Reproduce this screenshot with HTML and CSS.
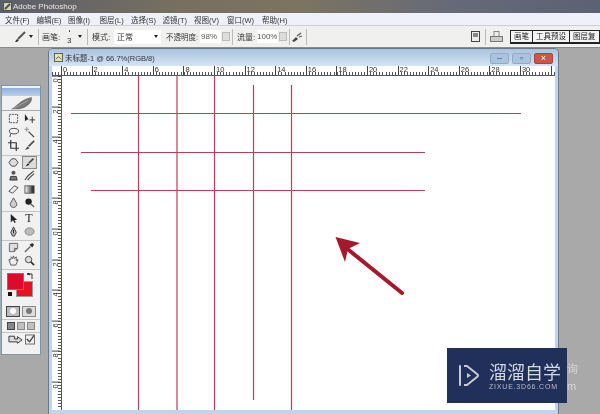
FILE: index.html
```html
<!DOCTYPE html>
<html>
<head>
<meta charset="utf-8">
<title>Adobe Photoshop</title>
<link rel="stylesheet" href="styles.css">
</head>
<body>
<div class="app">

<div class="titlebar">
<svg class="app-icon" width="9" height="9" viewBox="0 0 9 9"><rect x="0.5" y="0.5" width="8" height="8" fill="#d8d4a8" stroke="#555"/><path d="M2 7 L7 2" stroke="#456" stroke-width="2"/></svg>
<span>Adobe Photoshop</span>
</div>

<div class="menubar">
<span>文件(F)</span><span>编辑(E)</span><span>图像(I)</span><span>图层(L)</span><span>选择(S)</span><span>滤镜(T)</span><span class="m-view">视图(V)</span><span class="m-window">窗口(W)</span><span>帮助(H)</span>
</div>

<div class="options">
<svg class="opt-brush" width="12" height="12" viewBox="0 0 12 12"><path d="M1 11 L3 8 L5 9 L3 11 Z" fill="#333"/><path d="M4 8 L11 1" stroke="#555" stroke-width="2"/></svg>
<i class="arrow a-tool"></i>
<i class="sep s-tool"></i>
<span class="label l-brush">画笔:</span>
<span class="brush-size">3</span>
<i class="arrow a-brush"></i>
<i class="sep s-brush"></i>
<span class="label l-mode">模式:</span>
<span class="select">正常<i class="arrow"></i></span>
<span class="label l-opacity">不透明度:</span>
<span class="field f-opacity">98%</span><i class="spin"></i>
<i class="sep s-opacity"></i>
<span class="label l-flow">流量:</span>
<span class="field f-flow">100%</span><i class="spin"></i>
<i class="sep s-flow"></i>
<svg class="opt-air" width="12" height="12" viewBox="0 0 12 12"><path d="M1 10 L5 6 L7 8 L3 11 Z" fill="#444"/><path d="M6 5 L10 2 M8 6 L11 5" stroke="#555" stroke-width="1.2"/></svg>
<i class="sep s-air"></i>
<span class="spacer"></span>
<svg class="opt-doc" width="9" height="11" viewBox="0 0 9 11"><rect x="0.5" y="0.5" width="8" height="10" fill="#eee" stroke="#444"/><rect x="2" y="2" width="5" height="4" fill="#888"/></svg>
<i class="sep s-doc"></i>
<svg class="opt-print" width="13" height="12" viewBox="0 0 13 12"><rect x="4" y="0.5" width="5" height="5" fill="#eee" stroke="#888"/><rect x="0.5" y="5.5" width="12" height="5" fill="#ccc" stroke="#777"/></svg>
<div class="tabs"><span>画笔</span><span>工具预设</span><span>图层复</span></div>
</div>

<div class="workspace">

<div class="toolbox">
<div class="tool-head"></div>
<div class="tool-logo"><svg width="30" height="14" viewBox="0 0 30 16"><path d="M2 15 C8 13 12 4 26 1 C28 6 22 13 12 15 Z" fill="#777"/><path d="M6 14 L22 5" stroke="#aaa"/></svg></div>

<div class="tool-grid g-select">
<svg viewBox="0 0 12 12"><rect x="1.5" y="1.5" width="9" height="9" fill="none" stroke="#444" stroke-dasharray="2 1"/></svg>
<svg viewBox="0 0 12 12"><path d="M1 1 L1 9 L3.5 7 L5 7 Z" fill="#222"/><path d="M9 4 V11 M6 7.5 H12" stroke="#333"/></svg>
<svg viewBox="0 0 12 12"><ellipse cx="6.5" cy="4.5" rx="5" ry="3" fill="none" stroke="#444"/><path d="M3 7 L2 11" stroke="#444"/></svg>
<svg viewBox="0 0 12 12"><path d="M5 5 L11 11" stroke="#444" stroke-width="1.4"/><path d="M3 0 V5 M0.5 2.5 H5.500" stroke="#888"/></svg>
<svg viewBox="0 0 12 12"><path d="M3 0 V9 H12 M0 3 H9 V12" fill="none" stroke="#333" stroke-width="1.3"/></svg>
<svg viewBox="0 0 12 12"><path d="M1 11 L4 7 L6 9 Z" fill="#333"/><path d="M5 7 L11 1" stroke="#555" stroke-width="2"/></svg>
</div>

<div class="tool-grid">
<svg viewBox="0 0 12 12"><path d="M1 6 L4 2 H8 L11 6 L8 10 H4 Z" fill="#ddd" stroke="#444"/></svg>
<svg class="is-active" viewBox="0 0 14 14"><path d="M2 12 L5 8 L7 10 Z" fill="#222"/><path d="M6 8 L12 2" stroke="#444" stroke-width="2"/></svg>
<svg viewBox="0 0 12 12"><circle cx="6" cy="3" r="2.2" fill="#555"/><path d="M2 11 L3 7 H9 L10 11 Z" fill="#777" stroke="#333"/></svg>
<svg viewBox="0 0 12 12"><path d="M1 11 C3 6 6 5 11 1 M4 11 C6 8 9 6 11 4" fill="none" stroke="#444" stroke-width="1.2"/></svg>
<svg viewBox="0 0 12 12"><path d="M1 8 L7 2 L11 4 L5 10 Z" fill="#eee" stroke="#444"/></svg>
<svg viewBox="0 0 12 12"><defs><linearGradient id="grad"><stop offset="0" stop-color="#fff"/><stop offset="1" stop-color="#111"/></linearGradient></defs><rect x="1" y="2" width="10" height="8" fill="url(#grad)" stroke="#555"/></svg>
<svg viewBox="0 0 12 12"><path d="M6 1 L9.500 7 A3.600 3.600 0 1 1 2.500 7 Z" fill="#ccc" stroke="#555"/></svg>
<svg viewBox="0 0 12 12"><circle cx="5" cy="5" r="3.500" fill="#222"/><path d="M7 7 L11 11" stroke="#666" stroke-width="1.5"/></svg>
</div>

<div class="tool-grid">
<svg viewBox="0 0 12 12"><path d="M3 1 V10 L5.500 8 L7 11 L8.500 10 L7 7.500 H10 Z" fill="#222"/></svg>
<span class="tool-t">T</span>
<svg viewBox="0 0 12 12"><path d="M6 1 L9 7 L7 11 H5 L3 7 Z" fill="#bbb" stroke="#333"/><path d="M6 4 V8" stroke="#222"/></svg>
<svg viewBox="0 0 12 12"><ellipse cx="6" cy="6" rx="5" ry="4" fill="#bbb" stroke="#888"/></svg>
</div>

<div class="tool-grid">
<svg viewBox="0 0 12 12"><path d="M1.500 1.500 H10.500 V7 L7 10.500 H1.500 Z" fill="#ddd" stroke="#666"/><path d="M7 10.500 V7 H10.500" fill="#999" stroke="#666"/></svg>
<svg viewBox="0 0 12 12"><path d="M1 11 L7 5" stroke="#666" stroke-width="1.5"/><path d="M6 3 L9 6 L11 3 L9 1 Z" fill="#333"/></svg>
<svg viewBox="0 0 12 12"><path d="M3 11 L1 5 L3 5 L3.500 2 L5 4 L6 1 L7 4 L9 2 L9 6 L11 5 L8.500 11 Z" fill="#eee" stroke="#555"/></svg>
<svg viewBox="0 0 12 12"><circle cx="5" cy="5" r="3.500" fill="#ddd" stroke="#444"/><path d="M7.500 7.500 L11 11" stroke="#333" stroke-width="1.800"/></svg>
</div>

<div class="swatches">
<i class="swatch-bg"></i>
<i class="swatch-fg"></i>
<i class="swatch-mini"></i>
<svg class="swatch-swap" width="6" height="6" viewBox="0 0 6 6"><path d="M0 1 H5 V6 M3 0 L0 1 L3 2" fill="none" stroke="#333"/></svg>
</div>

<div class="tool-row">
<span class="mode is-down"><i></i></span>
<span class="mode"><i class="dark"></i></span>
</div>
<div class="tool-row small">
<span class="screen is-down"></span><span class="screen"></span><span class="screen"></span>
</div>
<div class="tool-row jump">
<svg width="15" height="11" viewBox="0 0 16 11"><path d="M1 2 H7 V5 H10 V2.500 L15 6 L10 9.500 V8 H1 Z" fill="#ddd" stroke="#333"/></svg>
<svg width="10" height="11" viewBox="0 0 11 11"><rect x="0.500" y="0.500" width="10" height="10" fill="#eee" stroke="#666"/><path d="M2 5 L5 8 L10 1" fill="none" stroke="#444" stroke-width="1.500"/></svg>
</div>
</div>

<div class="docwin">
<div class="doc-title">
<svg width="9" height="9" viewBox="0 0 10 10"><rect x="0.500" y="0.500" width="9" height="9" fill="#e8e4b0" stroke="#555"/><path d="M2 7 L5 4 L8 7" fill="none" stroke="#456"/></svg>
<span class="doc-name">未标题-1 @ 66.7%(RGB/8)</span>
<span class="win-btn">–</span><span class="win-btn">▫</span><span class="win-btn close">×</span>
</div>
<div class="hruler">
<span>0</span><span>2</span><span>4</span><span>6</span><span>8</span><span>10</span><span>12</span><span>14</span><span>16</span><span>18</span><span>20</span><span>22</span><span>24</span><span>26</span><span>28</span><span>30</span><span></span>
</div>
<div class="doc-body">
<div class="vruler">
<span>0</span><span>2</span><span>4</span><span>6</span><span>8</span><span>0</span><span>2</span><span>4</span><span>6</span><span>8</span><span>0</span>
</div>
<div class="canvas">
<svg width="493" height="334" viewBox="0 0 493 334">
<g stroke="#b8405c" stroke-width="1.200" fill="none">
<path d="M9 37.500 H459"/>
<path d="M19 76.500 H363"/>
<path d="M29 114.500 H363"/>
<path d="M76.500 0 V334"/>
<path d="M115 0 V334"/>
<path d="M152.500 0 V334"/>
<path d="M191.500 9 V324"/>
<path d="M229.500 9 V334"/>
</g>
<path d="M340 217 L283 171" stroke="#a5192c" stroke-width="4" stroke-linecap="round"/>
<path d="M273.500 161 L298 167 L286 173 L283 186 Z" fill="#a5192c"/>
</svg>
</div>
</div>
</div>

<div class="ghost">询<br>m</div>
<div class="watermark">
<svg width="25" height="25" viewBox="0 0 25 25"><path d="M5 3 V22" stroke="#c8ccd6" stroke-width="2" stroke-linecap="round"/><path d="M9 3 H12 L22 11 Q24 12.500 22 14 L12 22 H9" fill="none" stroke="#c8ccd6" stroke-width="2" stroke-linejoin="round"/><path d="M12 10 L16 12.500 L12 15 Z" fill="#c8ccd6"/></svg>
<div class="wm-text"><b>溜溜自学</b><small>ZIXUE.3D66.COM</small></div>
</div>

</div>
</div>
</body>
</html>
```

FILE: styles.css
```css
/* Photoshop window */

html, body
{ margin: 0;
height: 100%;
overflow: hidden;
}

.app
{ width: 600px;
height: 414px;
display: flex;
flex-direction: column;
overflow: hidden;
font-family: "Liberation Sans", "Noto Sans CJK SC", sans-serif;
color: #333;
filter: blur(0.35px);
}

.titlebar
{ height: 13px;
display: flex;
align-items: center;
gap: 1px;
padding-left: 3px;
background: linear-gradient(90deg, #5c5f6b 0, #77705f 30%, #7b7460 50%, #666a78 75%, #5b6273 100%);
color: #e8e8e8;
font-size: 8px;
}

.menubar
{ height: 12px;
display: flex;
align-items: center;
gap: 6.500px;
padding-left: 5px;
background: #eef0fb;
font-size: 7.500px;
}

.menubar span
{ width: 25px;
white-space: nowrap;
}

.menubar .m-view { width: 26.500px; }
.menubar .m-window { width: 28.500px; }

/* Options bar */

.options
{ height: 22px;
display: flex;
align-items: center;
background: #f0f0ef;
border-top: 1px solid #cfcfd2;
box-sizing: border-box;
font-size: 8px;
}

.label
{ white-space: nowrap;
}

.arrow
{ width: 0;
height: 0;
border: 2.500px solid transparent;
border-top: 3px solid #222;
border-bottom: 0;
}

.sep
{ width: 1px;
height: 16px;
background: #bbb;
}

.opt-brush { margin-left: 14px; }
.a-tool { margin-left: 3px; }
.s-tool { margin-left: 5px; }
.l-brush { margin-left: 3px; width: 20px; }
.brush-size { position: relative; margin: 7px 0 0 5px; width: 6px; }
.brush-size::before
{ content: "";
position: absolute;
left: 2px;
top: -6px;
width: 1px;
height: 2px;
background: #555;
}
.a-brush { margin-left: 5px; }
.s-brush { margin-left: 5px; }
.l-mode { margin-left: 4px; width: 22px; }

.select
{ width: 47px;
height: 14px;
display: flex;
align-items: center;
justify-content: space-between;
box-sizing: border-box;
padding: 0 3px;
background: #fff;
}

.l-opacity { margin-left: 5px; width: 34px; font-size: 7.500px; }

.field
{ height: 13px;
line-height: 13px;
background: #fff;
font-size: 8px;
color: #555;
}

.f-opacity { width: 20px; padding-left: 1px; }
.f-flow { width: 21px; }

.spin
{ width: 8px;
height: 9px;
margin-left: 1px;
background: #ddd;
border: 1px solid #bbb;
box-sizing: border-box;
}

.s-opacity { margin-left: 2px; }
.l-flow { margin-left: 4px; width: 20px; }
.s-flow { margin-left: 2px; }
.opt-air { margin-left: 1px; }
.s-air { margin-left: 3px; }
.spacer { flex: 1; }
.s-doc { margin-left: 5px; }
.opt-print { margin-left: 4px; }

.tabs
{ display: flex;
align-self: flex-end;
margin: 0 0 3px 7px;
width: 90px;
overflow: hidden;
}

.tabs span
{ border: 1px solid #222;
border-bottom: 2px solid #222;
padding: 0 3px;
height: 11px;
line-height: 11px;
background: #f4f4f4;
font-size: 7.500px;
white-space: nowrap;
color: #222;
}

.tabs span + span { margin-left: -1px; }

/* Work area */

.workspace
{ position: relative;
flex: 1;
background: #a9a9a9;
border-top: 1px solid #8c8c8c;
}

.toolbox
{ position: absolute;
left: 1px;
top: 37px;
width: 38px;
height: 266px;
background: #f0f1f0;
border: 1px solid #7f96a8;
display: flex;
flex-direction: column;
padding-top: 2px;
box-sizing: content-box;
}

.tool-head
{ height: 8px;
flex: none;
background: linear-gradient(#8fb0dc, #bcd0ea);
}

.tool-logo
{ height: 14px;
flex: none;
display: flex;
justify-content: flex-end;
padding-right: 3px;
border-bottom: 1px solid #aaa;
}

.tool-grid
{ display: grid;
flex: none;
grid-template-columns: 16px 16px;
grid-auto-rows: 13.500px;
justify-content: center;
justify-items: center;
align-items: center;
padding-bottom: 1px;
border-bottom: 1px solid #c4c4c4;
}

.tool-grid.g-select { padding: 1px 0 2px; }

.tool-grid svg
{ width: 11px;
height: 11px;
}

.tool-grid svg.is-active
{ width: 15px;
height: 13px;
background: #dcdcdc;
border: 1px solid #888;
box-sizing: border-box;
}

.tool-t
{ font: 12px "Liberation Serif", serif;
color: #222;
}

.swatches
{ position: relative;
flex: none;
height: 28px;
}

.swatch-fg, .swatch-bg, .swatch-mini
{ position: absolute;
display: block;
box-sizing: border-box;
}

.swatch-bg
{ left: 14px;
top: 11px;
width: 17px;
height: 16px;
background: #e8121c;
border: 1px solid #999;
}

.swatch-fg
{ left: 5px;
top: 3px;
width: 17px;
height: 17px;
background: #dc0b2c;
border: 1px solid #777;
}

.swatch-mini
{ left: 5px;
top: 21px;
width: 6px;
height: 6px;
background: #111;
border: 1px solid #eee;
}

.swatch-swap
{ position: absolute;
left: 25px;
top: 3px;
}

.tool-row
{ display: flex;
flex: none;
justify-content: center;
gap: 2px;
margin-top: 8px;
}

.tool-row.small { margin-top: 2px; padding-top: 2px; border-top: 1px solid #c4c4c4; }
.tool-row.jump { margin-top: 2px; padding-top: 1px; border-top: 1px solid #c4c4c4; }

.mode
{ width: 14px;
height: 11px;
box-sizing: border-box;
display: flex;
align-items: center;
justify-content: center;
background: #ddd;
border: 1px solid #888;
}

.mode.is-down { background: #bbb; border-color: #444; }

.mode i
{ width: 6px;
height: 6px;
border-radius: 50%;
background: #fff;
}

.mode i.dark { background: #777; }

.screen
{ width: 8px;
height: 8px;
box-sizing: border-box;
background: #c0c0c0;
border: 1px solid #888;
}

.screen.is-down { background: #888; border-color: #444; }

/* Document window */

.docwin
{ position: absolute;
left: 48px;
top: 0;
width: 511px;
height: 366px;
box-sizing: border-box;
padding: 0 3px 0 3px;
background: #bcd6ee;
border: 1px solid #6e7884;
border-bottom: 0;
border-radius: 5px 5px 0 0;
display: flex;
flex-direction: column;
}

.doc-title
{ height: 17px;
flex: none;
margin: 0 -3px;
padding: 0 5px;
display: flex;
align-items: center;
gap: 1px;
background: linear-gradient(#a9c3df, #d4e4f4);
border-radius: 4px 4px 0 0;
font-size: 7.500px;
color: #333;
}

.doc-name { flex: 1; margin-left: 1px; }

.win-btn
{ width: 17px;
height: 9px;
line-height: 8px;
text-align: center;
font-size: 9px;
color: #556;
background: #a9c4e0;
border: 1px solid #9ab;
border-radius: 2px;
margin: 2px 0 0 2px;
}

.win-btn.close
{ background: #c9574a;
border-color: #a44;
color: #fff;
}

.hruler
{ height: 9px;
flex: none;
display: flex;
padding-left: 9px;
overflow: hidden;
background: #fff repeating-linear-gradient(90deg, #555 0 1px, transparent 1px 3.060px) 0 100% / 100% 3px no-repeat;
border-bottom: 1px solid #555;
box-sizing: content-box;
}

.hruler span
{ flex: 0 0 30.600px;
box-sizing: border-box;
padding-left: 1px;
border-left: 1px solid #444;
font-size: 7.500px;
line-height: 8px;
}

.doc-body
{ display: flex;
height: 334px;
}

.vruler
{ width: 10px;
flex: none;
overflow: hidden;
background: #fff repeating-linear-gradient(#555 0 1px, transparent 1px 3.060px) 100% 0 / 3px 100% no-repeat;
border-right: 1px solid #555;
box-sizing: border-box;
}

.vruler span
{ display: block;
height: 30.600px;
box-sizing: border-box;
padding-bottom: 1px;
border-bottom: 1px solid #444;
writing-mode: vertical-rl;
transform: rotate(180deg);
text-align: right;
font-size: 7.500px;
line-height: 8px;
}

.canvas
{ flex: 1;
background: #fff;
}

.canvas svg { display: block; }

/* Watermark */

.watermark
{ position: absolute;
left: 447px;
top: 300px;
width: 120px;
height: 55px;
box-sizing: border-box;
padding-left: 8px;
display: flex;
align-items: center;
gap: 9px;
background: #20305a;
color: #d5d8e0;
}

.wm-text
{ display: flex;
flex-direction: column;
gap: 1px;
}

.wm-text b
{ font: 400 18px/21px "Noto Sans CJK SC", sans-serif;
white-space: nowrap;
}

.wm-text small
{ font-size: 7px;
line-height: 8px;
letter-spacing: 0.800px;
color: #b8bcc8;
}

.ghost
{ position: absolute;
left: 567px;
top: 313px;
font-size: 11px;
line-height: 17px;
color: #d4d4d4;
}
```
